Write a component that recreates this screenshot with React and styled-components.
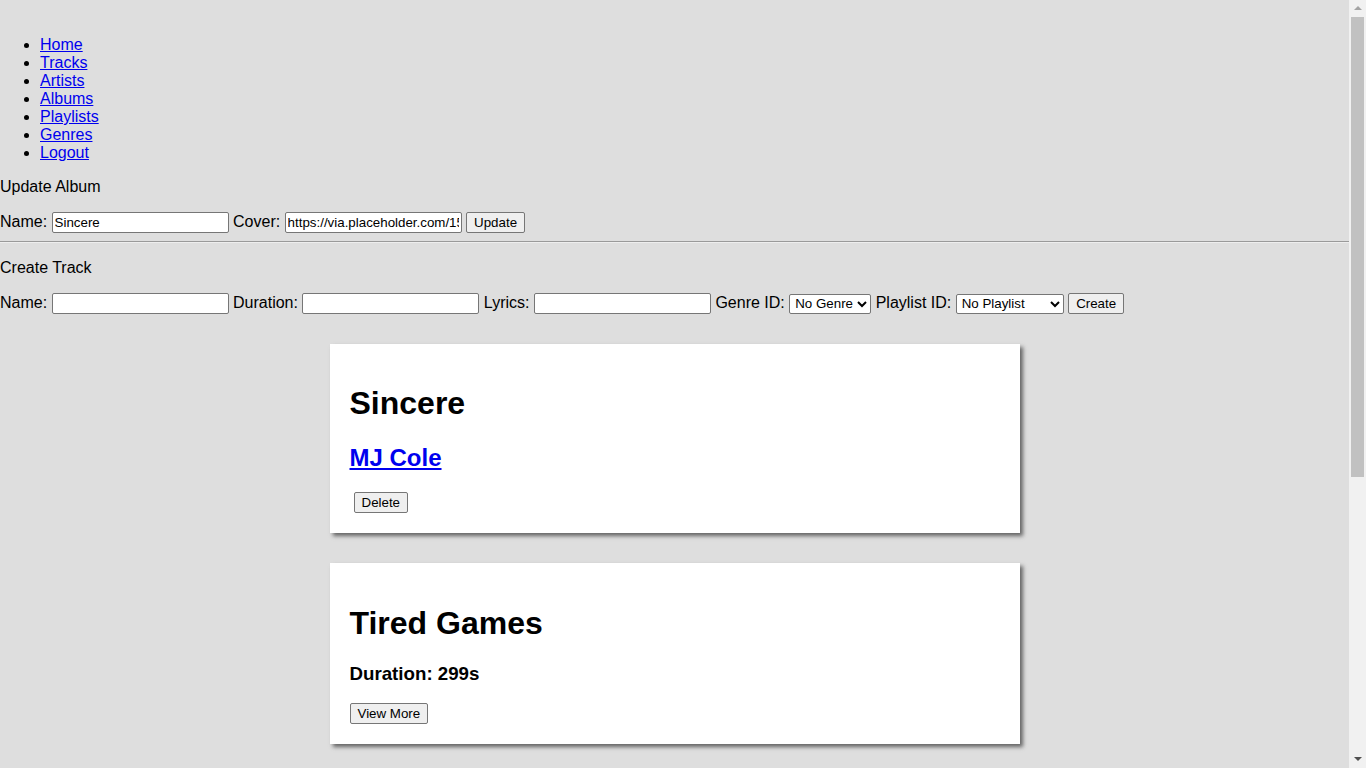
import React from "react";
import styled, { createGlobalStyle } from "styled-components";

const Global = createGlobalStyle`
  html, body { margin: 0; padding: 0; }
  body {
    background: #dedede;
    font-family: "Liberation Sans", Arial, sans-serif;
    font-size: 16px;
    line-height: 18px;
    color: #000;
    overflow: hidden;
  }
`;

const Page = styled.div`
  margin-right: 17px;
`;

const ScrollRail = styled.div`
  position: fixed;
  top: 0;
  right: 0;
  width: 17px;
  height: 100vh;
  background: #f1f1f1;
  display: flex;
  flex-direction: column;
`;

const ScrollArrow = styled.div`
  height: 17px;
  flex: none;
  display: flex;
  justify-content: center;
  align-items: ${(p) => (p.$up ? "flex-start" : "flex-start")};
  padding-top: 6px;
  box-sizing: border-box;
  &::before {
    content: "";
    width: 0;
    height: 0;
    border-left: 4px solid transparent;
    border-right: 4px solid transparent;
    ${(p) =>
      p.$up
        ? "border-bottom: 4px solid #a3a3a3;"
        : "border-top: 4px solid #505050;"}
  }
`;

const ScrollTrack = styled.div`
  flex: 1;
  padding: 0 2px;
`;

const ScrollThumb = styled.div`
  height: 460px;
  background: #c1c1c1;
`;

const NavList = styled.ul`
  margin: 36px 0 16px;
  padding-left: 40px;
  list-style: disc;
`;

const NavItem = styled.li`
  line-height: 18px;
`;

const Link = styled.a`
  color: #0000ee;
  text-decoration: underline;
`;

const SectionTitle = styled.p`
  margin: 16px 0;
  line-height: 18px;
`;

const Form = styled.form`
  margin: 0;
  white-space: nowrap;
`;

const TextInput = styled.input`
  box-sizing: border-box;
  width: 177px;
  height: 21px;
  border: 1px solid #767676;
  border-radius: 2px;
  padding: 1px 2px;
  margin: 0;
  font-family: "Liberation Sans", Arial, sans-serif;
  font-size: 13.333px;
  background: #fff;
  color: #000;
`;

const Select = styled.select`
  box-sizing: border-box;
  width: ${(p) => p.$w}px;
  height: 20px;
  border: 1px solid #767676;
  border-radius: 2px;
  margin: 0;
  font-family: "Liberation Sans", Arial, sans-serif;
  font-size: 13.333px;
  background: #fff;
  color: #000;
  padding: 0 0 0 1px;
`;

const Button = styled.button`
  box-sizing: border-box;
  height: 21px;
  padding: 1px 7px;
  margin: 0;
  border: 1px solid #767676;
  border-radius: 2px;
  background: #efefef;
  font-family: "Liberation Sans", Arial, sans-serif;
  font-size: 13.333px;
  color: #000;
`;

const Rule = styled.hr`
  margin: 8px 0;
  border: none;
  border-top: 1px solid #9a9a9a;
  border-bottom: 1px solid #eeeeee;
  height: 0;
`;

const CardList = styled.div`
  padding-top: 30px;
`;

const Card = styled.div`
  width: 650px;
  margin: 0 auto 30px;
  padding: 20px;
  background: #fff;
  box-shadow: 3px 3px 4px rgba(0, 0, 0, 0.55);
  line-height: normal;
`;

const Title = styled.h1`
  font-size: 32px;
  font-weight: bold;
  margin: 21.44px 0;
  line-height: 37px;
`;

const Artist = styled.h2`
  font-size: 24px;
  font-weight: bold;
  margin: 19.92px 0;
  line-height: 27.5px;
`;

const Sub = styled.h3`
  font-size: 18.72px;
  font-weight: bold;
  margin: 18.72px 0;
  line-height: 21.5px;
`;

const Actions = styled.div`
  height: 21px;
  padding-top: ${(p) => p.$top || 0}px;
  display: flex;
  align-items: center;
  padding-left: ${(p) => p.$indent || 0}px;
`;

const navLinks = ["Home", "Tracks", "Artists", "Albums", "Playlists", "Genres", "Logout"];

const tracks = [{ name: "Tired Games", duration: 299 }];

export default function App() {
  return (
    <>
      <Global />
      <Page>
        <nav>
          <NavList>
            {navLinks.map((l) => (
              <NavItem key={l}>
                <Link href="#">{l}</Link>
              </NavItem>
            ))}
          </NavList>
        </nav>

        <SectionTitle>Update Album</SectionTitle>
        <Form onSubmit={(e) => e.preventDefault()}>
          Name: <TextInput defaultValue="Sincere" />{" "}
          Cover: <TextInput defaultValue="https://via.placeholder.com/150" />{" "}
          <Button>Update</Button>
        </Form>
        <Rule />

        <SectionTitle>Create Track</SectionTitle>
        <Form onSubmit={(e) => e.preventDefault()}>
          Name: <TextInput />{" "}
          Duration: <TextInput />{" "}
          Lyrics: <TextInput />{" "}
          Genre ID:{" "}
          <Select $w={82} defaultValue="">
            <option value="">No Genre</option>
          </Select>{" "}
          Playlist ID:{" "}
          <Select $w={108} defaultValue="">
            <option value="">No Playlist</option>
          </Select>{" "}
          <Button>Create</Button>
        </Form>

        <CardList>
          <Card>
            <Title>Sincere</Title>
            <Artist>
              <Link href="#">MJ Cole</Link>
            </Artist>
            <Actions $indent={4} $top={1}>
              <Button>Delete</Button>
            </Actions>
          </Card>
          {tracks.map((t) => (
            <Card key={t.name}>
              <Title>{t.name}</Title>
              <Sub>Duration: {t.duration}s</Sub>
              <Actions>
                <Button>View More</Button>
              </Actions>
            </Card>
          ))}
        </CardList>
      </Page>
      <ScrollRail aria-hidden="true">
        <ScrollArrow $up />
        <ScrollTrack>
          <ScrollThumb />
        </ScrollTrack>
        <ScrollArrow />
      </ScrollRail>
    </>
  );
}
